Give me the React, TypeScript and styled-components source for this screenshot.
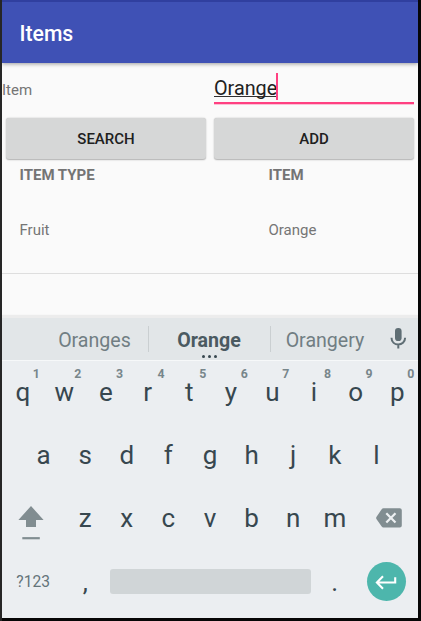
import React from "react";
import styled, { createGlobalStyle } from "styled-components";

const GlobalStyle = createGlobalStyle`
  * { box-sizing: border-box; }
  body { margin: 0; background: #000; font-family: Roboto, sans-serif; }
`;

const Frame = styled.div`
  width: 421px;
  height: 621px;
  padding: 0 3px 3px 2px;
  background: linear-gradient(90deg, #262626 0 2px, #060606 2px);
`;

const Screen = styled.div`
  height: 618px;
  display: flex;
  flex-direction: column;
  background: #fafafa;
  overflow: hidden;
`;

const AppBar = styled.header`
  flex: none;
  height: 63px;
  padding: 3px 0 0 17.5px;
  border-top: 2px solid #303f9f;
  background: #3f51b5;
  box-shadow: 0 1px 4px rgba(0, 0, 0, 0.38);
  color: #fff;
  font-size: 21.2px;
  font-weight: 500;
  line-height: 58px;
`;

const FormRow = styled.div`
  flex: none;
  display: grid;
  grid-template-columns: 208px 208px;
  height: 51px;
`;

const Label = styled.label`
  padding-top: 18px;
  color: #757575;
  font-size: 15px;
  line-height: 18px;
`;

const Field = styled.div`
  display: flex;
  align-items: flex-start;
  height: 41px;
  margin: 0 4px;
  padding: 10px 0 0;
  border-bottom: 2px solid #ff4081;
  box-shadow: 0 1px 0 rgba(255, 64, 129, 0.3);
`;

const FieldText = styled.span`
  height: 24px;
  border-bottom: 1px solid #303030;
  color: #212121;
  font-size: 19.8px;
  line-height: 31px;
`;

const Caret = styled.span`
  width: 2px;
  height: 27px;
  margin-left: -1px;
  background: #ff4081;
`;

const ButtonRow = styled.div`
  flex: none;
  display: grid;
  grid-template-columns: 200px 200px;
  gap: 8px;
  padding: 4px 4px 0;
`;

const Button = styled.button`
  height: 41px;
  padding: 1px 0 0;
  border: 0;
  border-radius: 3px;
  background: #d6d7d7;
  box-shadow: 0 0.5px 1.5px rgba(0, 0, 0, 0.3);
  color: #202020;
  font: 500 15px Roboto, sans-serif;
`;

const TableRow = styled.div<{ $head?: boolean }>`
  flex: none;
  display: grid;
  grid-template-columns: 249px 1fr;
  padding-left: 17.5px;
  height: ${(p) => (p.$head ? 33 : 82)}px;
  line-height: ${(p) => (p.$head ? 33 : 76)}px;
  border-bottom: ${(p) => (p.$head ? "0" : "1px solid #dedede")};
  color: ${(p) => (p.$head ? "#747474" : "#757575")};
  font-size: 15px;
  font-weight: ${(p) => (p.$head ? 700 : 400)};
`;

const Keyboard = styled.section`
  flex: none;
  height: 303px;
  margin-top: auto;
  border-top: 3px solid #ececec;
  background: #ebeef1;
  box-shadow: 0 0 2px rgba(0, 0, 0, 0.04);
`;

const Suggestions = styled.div`
  display: grid;
  grid-template-columns: 147px 122px 109px 38px;
  align-items: center;
  height: 43px;
  background: #e2e6e8;
  border-bottom: 1px solid #f6f8f9;
`;

const Suggestion = styled.div<{ $main?: boolean; $first?: boolean }>`
  position: relative;
  height: 26px;
  padding-left: ${(p) => (p.$first ? 39 : 0)}px;
  padding-right: ${(p) => (p.$first ? 0 : 1)}px;
  border-right: ${(p) => (p.$first || p.$main ? "1px solid #cacfd1" : "0")};
  color: ${(p) => (p.$main ? "#4b5a61" : "#717e83")};
  font-size: 19.6px;
  font-weight: ${(p) => (p.$main ? 700 : 400)};
  line-height: 29px;
  text-align: center;
`;

const Dots = styled.span`
  position: absolute;
  left: 0;
  right: 0;
  bottom: -6px;
  display: flex;
  justify-content: center;
  gap: 3px;
`;

const Dot = styled.i`
  width: 3px;
  height: 3px;
  border-radius: 50%;
  background: #37474f;
`;

const KeyRow = styled.div<{ $cols: string; $inset?: number }>`
  display: grid;
  grid-template-columns: ${(p) => p.$cols};
  height: 63.3px;
  padding: 0 ${(p) => p.$inset ?? 0}px;
`;

const Key = styled.div`
  position: relative;
  display: flex;
  align-items: center;
  justify-content: center;
  padding: 0 0 2px;
  color: #37474f;
  font-size: 26px;
  line-height: 30px;
`;

const Hint = styled.sup`
  position: absolute;
  top: 5px;
  right: 3.8px;
  color: #78868b;
  font-size: 12.3px;
  font-weight: 700;
  line-height: 16px;
`;

const ModeKey = styled(Key)`
  color: #64747a;
  font-size: 15.6px;
`;

const ShiftKey = styled(Key)`
  padding: 7px 4px 0 0;
`;

const DeleteKey = styled(Key)`
  padding: 0 0 3px 4px;
`;

const SpaceBar = styled.div`
  height: 25px;
  margin: 18.2px 3px 0 4px;
  border-radius: 3px;
  background: #d0d5d7;
`;

const EnterKey = styled.div`
  justify-self: center;
  display: flex;
  width: 39px;
  height: 39px;
  margin-top: 11.3px;
  border-radius: 50%;
  background: #4db6ac;
`;

const MicIcon = () => (
  <svg width="38" height="30" viewBox="0 0 38 30">
    <rect x="15" y="4" width="6.6" height="13" rx="3.1" fill="#5f6e74" />
    <path d="M11.5 13.7c0 9 13.6 9 13.6 0M18.3 20.3v4.2" fill="none" stroke="#5f6e74" strokeWidth="2" />
  </svg>
);

const ShiftIcon = () => (
  <svg width="26" height="34" viewBox="0 0 26 34">
    <path d="M13 0L25.6 14H18v7H8v-7H.4z" fill="#818d91" />
    <path d="M4.3 32.2h17.5" stroke="#818d91" strokeWidth="2.2" />
  </svg>
);

const DeleteIcon = () => (
  <svg width="26" height="20" viewBox="0 0 26 20">
    <path d="M7.4.2h16.4q2 0 2 2v15.4q0 2-2 2H7.4q-1 0-1.7-1L.4 11q-.5-1 0-2L5.7 1.2q.7-1 1.7-1z" fill="#818d91" />
    <path d="M10.3 5.2l9.2 9.4M19.5 5.2l-9.2 9.4" stroke="#edf0f2" strokeWidth="2.2" />
  </svg>
);

const EnterIcon = () => (
  <svg width="39" height="39" viewBox="0 0 39 39">
    <path d="M28.2 15.3v5.2H10.5M16 14.3l-6.1 6.2 6.1 6.2" fill="none" stroke="#fff" strokeWidth="2.1" />
  </svg>
);

export default function App() {
  return (
    <Frame>
      <GlobalStyle />
      <Screen>
        <AppBar>Items</AppBar>
        <FormRow>
          <Label>Item</Label>
          <Field>
            <FieldText>Orange</FieldText>
            <Caret />
          </Field>
        </FormRow>
        <ButtonRow>
          <Button>SEARCH</Button>
          <Button>ADD</Button>
        </ButtonRow>
        <TableRow $head>
          <span>ITEM TYPE</span>
          <span>ITEM</span>
        </TableRow>
        <TableRow>
          <span>Fruit</span>
          <span>Orange</span>
        </TableRow>
        <Keyboard>
          <Suggestions>
            <Suggestion $first>Oranges</Suggestion>
            <Suggestion $main>
              Orange
              <Dots>
                <Dot />
                <Dot />
                <Dot />
              </Dots>
            </Suggestion>
            <Suggestion>Orangery</Suggestion>
            <MicIcon />
          </Suggestions>
          <KeyRow $cols="repeat(10, 1fr)">
            {[..."qwertyuiop"].map((letter, i) => (
              <Key key={letter}>
                {letter}
                <Hint>{(i + 1) % 10}</Hint>
              </Key>
            ))}
          </KeyRow>
          <KeyRow $cols="repeat(9, 1fr)" $inset={20.8}>
            {[..."asdfghjkl"].map((letter) => (
              <Key key={letter}>{letter}</Key>
            ))}
          </KeyRow>
          <KeyRow $cols="62.4px repeat(7, 1fr) 62.4px">
            <ShiftKey>
              <ShiftIcon />
            </ShiftKey>
            {[..."zxcvbnm"].map((letter) => (
              <Key key={letter}>{letter}</Key>
            ))}
            <DeleteKey>
              <DeleteIcon />
            </DeleteKey>
          </KeyRow>
          <KeyRow $cols="62.4px 41.6px 208px 41.6px 62.4px">
            <ModeKey>?123</ModeKey>
            <Key>,</Key>
            <SpaceBar />
            <Key>.</Key>
            <EnterKey>
              <EnterIcon />
            </EnterKey>
          </KeyRow>
        </Keyboard>
      </Screen>
    </Frame>
  );
}
